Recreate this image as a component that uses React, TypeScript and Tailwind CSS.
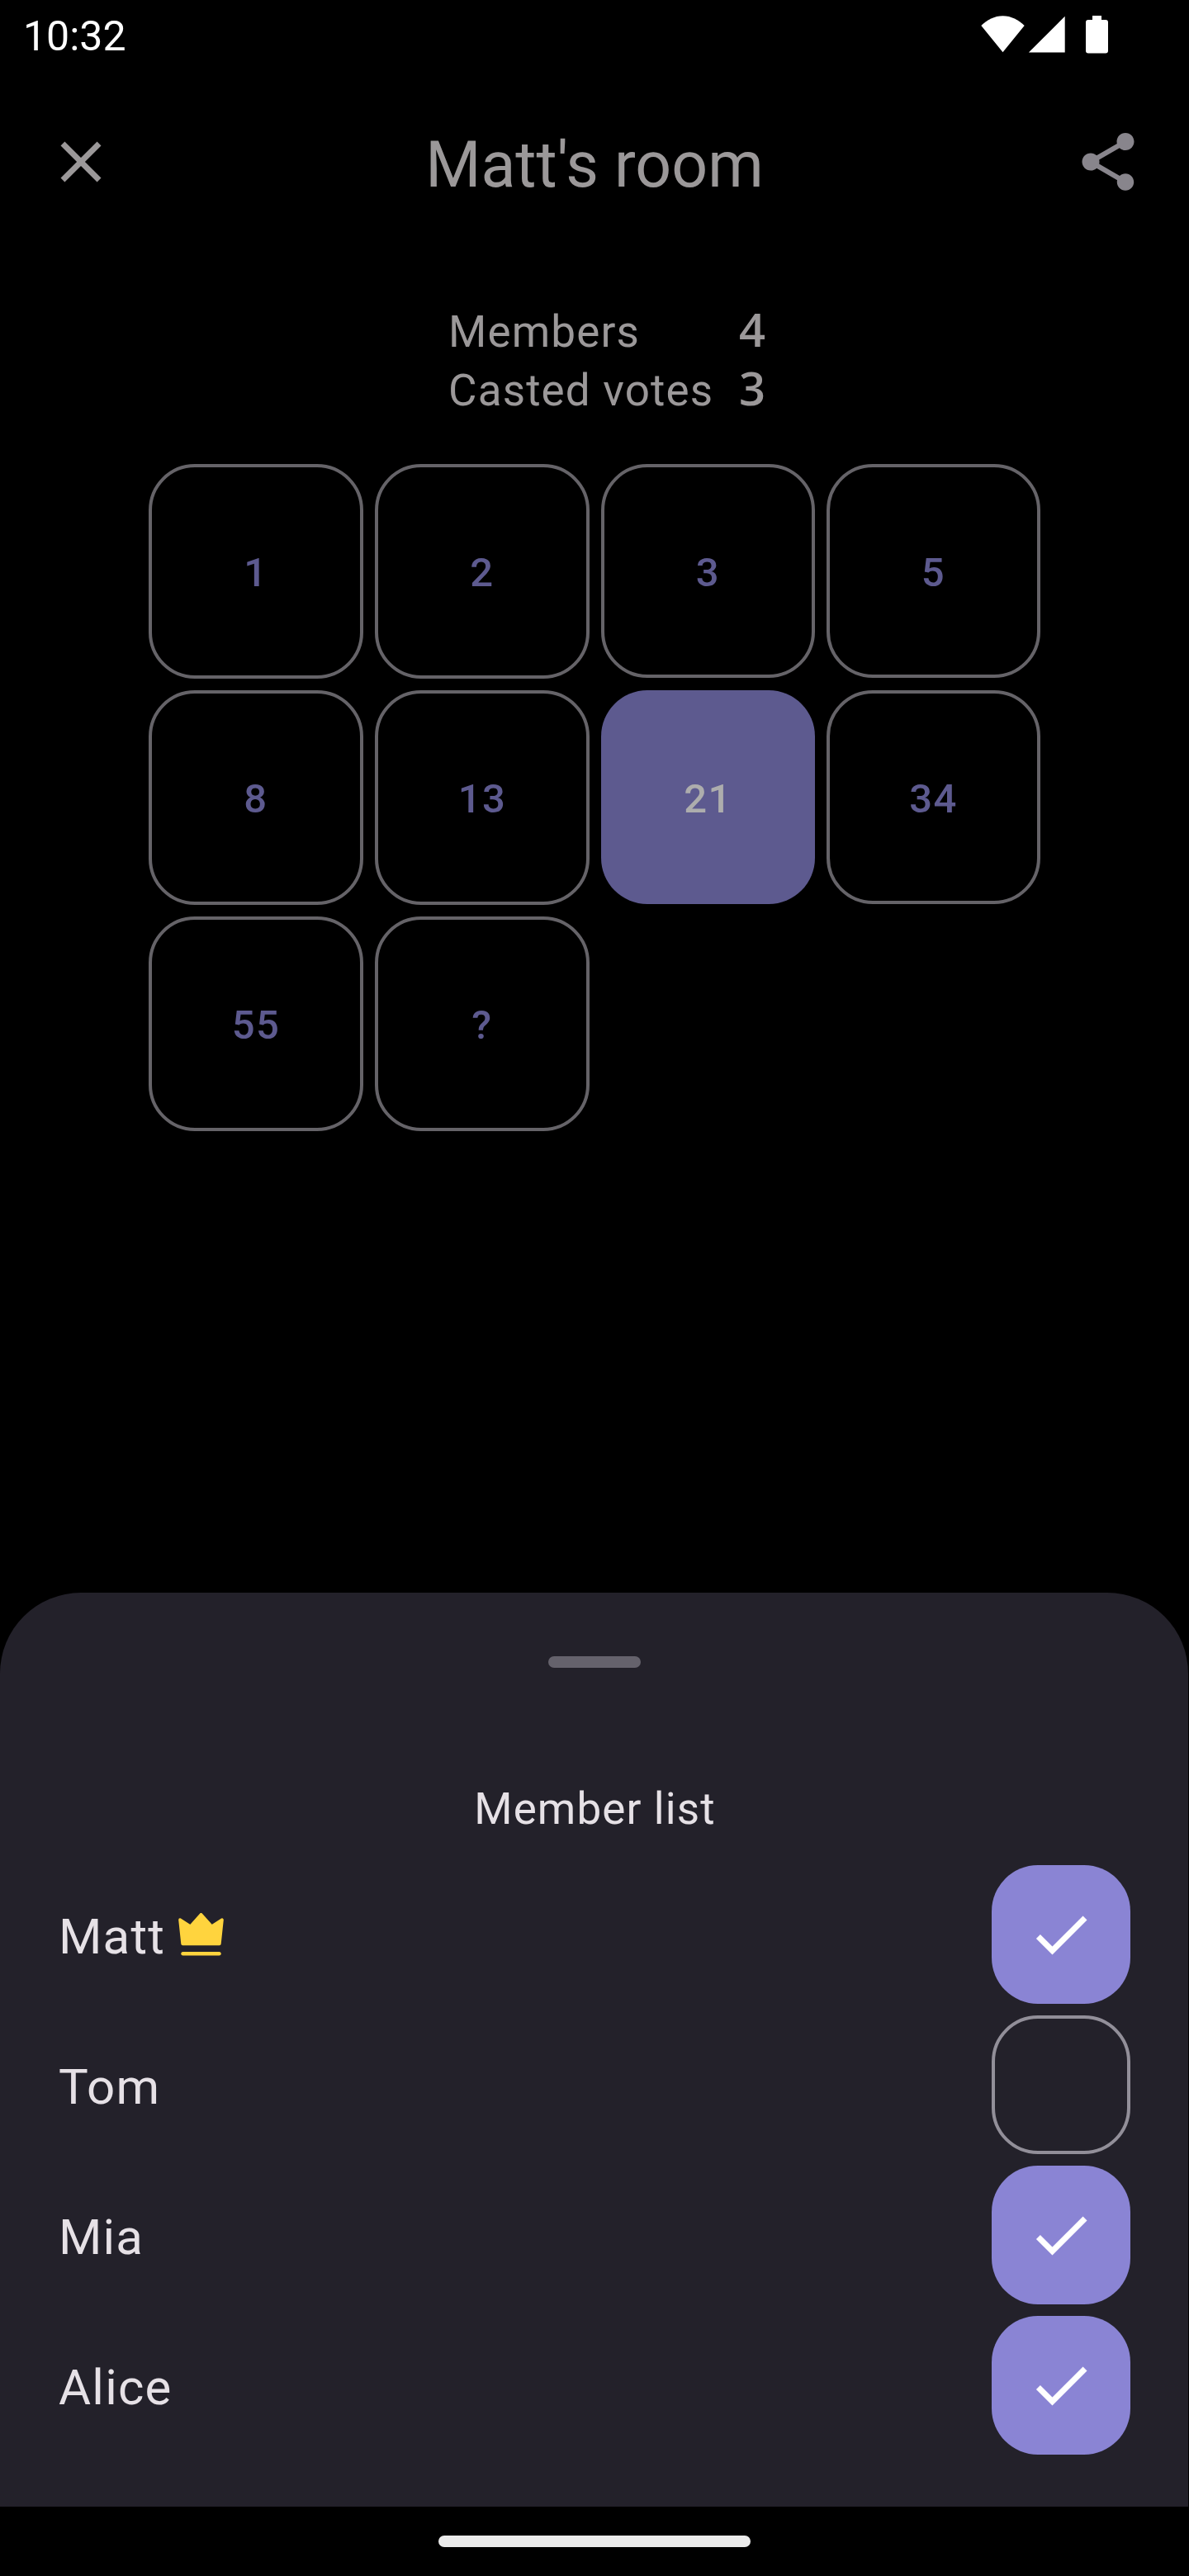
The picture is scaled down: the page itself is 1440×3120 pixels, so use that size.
const cards = ['1', '2', '3', '5', '8', '13', '21', '34', '55', '?'];

const members = [
  { name: 'Matt', owner: true, voted: true },
  { name: 'Tom', owner: false, voted: false },
  { name: 'Mia', owner: false, voted: true },
  { name: 'Alice', owner: false, voted: true },
];

function StatusBar() {
  return (
    <header className="flex h-[84px] items-start justify-between pt-[19px] pr-[98px] pl-[28px]">
      <span className="mt-[-4px] text-[50px] leading-[58px] text-white">10:32</span>
      <svg width="154" height="46" viewBox="0 0 154 46" fill="#fff">
        <path d="M0.3 12 C7.5 5.2 16.5 0.3 26.5 0.3 S45.500 5.200 52.700 12 L26.500 44.200 Z" />
        <path d="M101.700 0.700 V44.500 H57.900 Z" />
        <path d="M135 0 H146 V5 H151 Q154 5 154 8 V42.500 Q154 45.500 151 45.500 H130 Q127 45.500 127 42.500 V8 Q127 5 130 5 H135 Z" />
      </svg>
    </header>
  );
}

function TopBar() {
  return (
    <div className="flex h-[224px] items-center justify-between px-[56px]">
      <svg width="84" height="84" viewBox="0 0 24 24" fill="#9b9899">
        <path d="M19 6.410L17.590 5 12 10.590 6.410 5 5 6.410 10.590 12 5 17.590 6.410 19 12 13.410 17.590 19 19 17.590 13.410 12z" />
      </svg>
      <h1 className="mt-2 text-[77px] leading-[98px] whitespace-nowrap text-[#9b9899]">Matt's room</h1>
      <svg width="84" height="84" viewBox="0 0 24 24" fill="#88858c">
        <path d="M18 16.080c-.76 0-1.440.3-1.960.77L8.910 12.700c.05-.23.09-.46.09-.7s-.04-.47-.09-.7l7.050-4.110c.54.5 1.250.81 2.040.81 1.660 0 3-1.340 3-3s-1.340-3-3-3-3 1.340-3 3c0 .24.04.47.09.7L8.040 9.810C7.500 9.310 6.790 9 6 9c-1.660 0-3 1.340-3 3s1.340 3 3 3c.79 0 1.500-.31 2.040-.81l7.120 4.160c-.05.21-.08.43-.08.65 0 1.610 1.310 2.920 2.920 2.920s2.920-1.310 2.920-2.920-1.310-2.920-2.920-2.920z" />
      </svg>
    </div>
  );
}

function Stats() {
  return (
    <dl className="ml-[543px] grid w-[385px] grid-cols-[352px_33px] text-[53px] leading-[71px] whitespace-nowrap text-[#9b9899]">
      <dt className="tracking-[1.15px]">Members</dt>
      <dd className="-mt-1 font-['Open_Sans'] text-[56px] font-semibold">4</dd>
      <dt className="tracking-[1.15px]">Casted votes</dt>
      <dd className="-mt-1 font-['Open_Sans'] text-[56px] font-semibold">3</dd>
    </dl>
  );
}

function VoteCard({ value, selected, narrow }: { value: string; selected: boolean; narrow: boolean }) {
  return (
    <button
      className={`flex items-center justify-center rounded-[56px] pt-1 text-[49px] font-medium tracking-[1.5px] ${
        narrow ? 'h-[259px]' : 'h-[260px]'
      } ${selected ? 'bg-[#5d5a8f] text-[#adadad]' : 'border-4 border-[#656368] text-[#5d5a8f]'}`}
    >
      {value}
    </button>
  );
}

function Crown() {
  return (
    <svg className="ml-4" width="55" height="52" viewBox="0 0 55 52" fill="#ffd43e" stroke="#ffd43e" strokeLinejoin="round" strokeLinecap="round">
      <path strokeWidth="4" d="M2.200 8.300 L14.600 16.500 L27.500 2 L40.400 16.500 L52.800 8.300 L49.700 37.200 H5.300 Z" />
      <path strokeWidth="4.600" d="M5.600 49.300 H49.400" />
    </svg>
  );
}

function VoteBadge({ voted }: { voted: boolean }) {
  if (!voted) return <div className="size-[168px] rounded-[56px] border-4 border-[#928f99]" />;
  return (
    <div className="flex size-[168px] items-center justify-center rounded-[56px] bg-[#8a84d4]">
      <svg width="84" height="84" viewBox="0 0 24 24" fill="#fff">
        <path d="M9 16.170L4.830 12l-1.420 1.410L9 19 21 7l-1.410-1.410z" />
      </svg>
    </div>
  );
}

function MemberSheet() {
  return (
    <section className="flex h-[1107px] w-[1439px] flex-col rounded-t-[98px] bg-[#23212a] pt-[77px] text-[#e6e1e6]">
      <div className="mx-auto h-[14px] w-[112px] rounded-full bg-[#65626c]" />
      <h2 className="mt-[136px] h-[71px] pl-[2px] text-center text-[53px] leading-[71px] tracking-[1.1px]">Member list</h2>
      <ul className="mt-8 flex flex-col gap-[14px] px-[70px]">
        {members.map((m) => (
          <li key={m.name} className="flex h-[168px] items-center justify-between">
            <div className="flex items-center">
              <span className="pt-[5px] pl-px text-[60px] leading-[84px] tracking-[1.2px]">{m.name}</span>
              {m.owner && <Crown />}
            </div>
            <VoteBadge voted={m.voted} />
          </li>
        ))}
      </ul>
    </section>
  );
}

export default function App() {
  return (
    <div className="flex h-[3120px] w-[1440px] flex-col overflow-hidden bg-black font-['Roboto',sans-serif]">
      <StatusBar />
      <TopBar />
      <main className="flex grow flex-col pt-[59px]">
        <Stats />
        <div className="mt-[53px] ml-[180px] grid w-[1080px] grid-cols-[260px_260px_259px_259px] gap-[14px]">
          {cards.map((value, i) => (
            <VoteCard key={value} value={value} selected={value === '21'} narrow={i % 4 > 1} />
          ))}
        </div>
      </main>
      <MemberSheet />
      <footer className="flex h-[84px] items-center justify-center">
        <div className="h-[14px] w-[378px] rounded-full bg-[#ebebeb]" />
      </footer>
    </div>
  );
}
